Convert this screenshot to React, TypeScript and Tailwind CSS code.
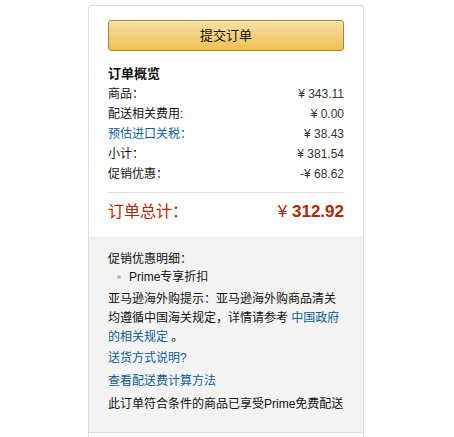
const font = { fontFamily: '"Liberation Sans", "Noto Sans CJK SC", Arial, sans-serif' };

const rows: { label: string; value: string; link?: boolean }[] = [
  { label: '商品：', value: '¥ 343.11' },
  { label: '配送相关费用:', value: '¥ 0.00' },
  { label: '预估进口关税：', value: '¥ 38.43', link: true },
  { label: '小计：', value: '¥ 381.54' },
  { label: '促销优惠：', value: '-¥ 68.62' }
];

export default function App() {
  return (
    <div className="min-h-[437px] bg-white pl-[88px] pt-[5px] text-[12px] text-[#111]" style={font}>
      <div className="w-[276px] rounded-t-[4px] border border-b-0 border-[#ddd]">
        <div className="px-[19px] pb-[13px] pt-[14px]">
          <button className="flex h-[31px] w-full items-center justify-center rounded-[3px] border border-[#a88734] bg-gradient-to-b from-[#f7dfa5] to-[#f0c14b] text-[13px] text-[#111] shadow-[inset_0_1px_0_rgba(255,255,255,0.4)]">
            提交订单
          </button>

          <h3 className="mt-[13px] text-[13px] font-bold leading-[20px]">订单概览</h3>
          {rows.map((row) => (
            <div key={row.label} className="flex justify-between leading-[20px]">
              <span className={row.link ? 'text-[#0b5e96]' : ''}>{row.label}</span>
              <span className="text-[#333]">{row.value}</span>
            </div>
          ))}

          <div className="mt-[8px] border-t border-[#ddd] pt-[7px]">
            <div className="flex items-center justify-between leading-[24px] text-[#b12704]">
              <span className="text-[16px]">订单总计：</span>
              <span className="text-[17px] font-bold">
                <span className="font-normal">¥</span> 312.92
              </span>
            </div>
          </div>
        </div>

        <div className="border-t border-[#e7e7e7] bg-[#f3f3f3] px-[19px] pb-[18px] pt-[12px]">
          <div className="leading-[18px]">促销优惠明细：</div>
          <ul className="leading-[18px]">
            <li className="flex items-center">
              <span className="ml-[9px] mr-[8px] h-[4px] w-[4px] rounded-full bg-[#bbb]" />
              Prime专享折扣
            </li>
          </ul>
          <p className="mt-[4px] leading-[19px]">
            亚马逊海外购提示：亚马逊海外购商品清关均遵循中国海关规定，详情请参考 <span className="text-[#0b5e96]">中国政府的相关规定</span> 。
          </p>
          <div className="mt-[1px] leading-[20px] text-[#0b5e96]">送货方式说明?</div>
          <div className="mt-[3px] leading-[20px] text-[#0b5e96]">查看配送费计算方法</div>
          <div className="mt-[3px] leading-[20px]">此订单符合条件的商品已享受Prime免费配送</div>
        </div>
        <div className="h-[8px] border-t border-[#ddd] bg-white" />
      </div>
    </div>
  );
}
